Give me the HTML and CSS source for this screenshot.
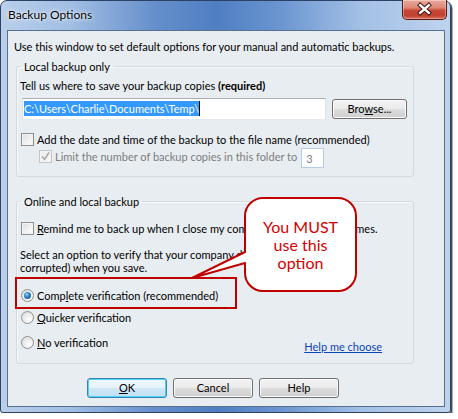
FILE: index.html
```html
<!DOCTYPE html>
<html>
<head>
<meta charset="utf-8">
<title>Backup Options</title>
<link rel="stylesheet" href="styles.css">
</head>
<body>
<div class="window">
  <div class="titlebar">
    <span class="title">Backup Options</span>
    <span class="close">
      <svg width="45" height="19" viewBox="0 0 45 19">
        <path d="M18 5 L27 13 M27 5 L18 13" stroke="#3b1410" stroke-width="4.6" stroke-linecap="square" fill="none"/>
        <path d="M18 5 L27 13 M27 5 L18 13" stroke="#ffffff" stroke-width="2.6" stroke-linecap="square" fill="none"/>
      </svg>
    </span>
  </div>
  <div class="client">
    <p class="intro">Use this window to set default options for your manual and automatic backups.</p>

    <fieldset class="group g1">
      <legend>Local backup only</legend>
      <p class="prompt">Tell us where to save your backup copies <b>(required)</b></p>
      <div class="path-row">
        <div class="textbox"><span class="sel">C:\Users\Charlie\Documents\Temp\</span><span class="caret"></span></div>
        <button class="btn browse">Bro<u>w</u>se...</button>
      </div>
      <div class="check row1"><span class="box"></span><span>Add the date and time of the backup to the file name (recommended)</span></div>
      <div class="check row2 disabled">
        <span class="box checked"><svg width="11" height="11" viewBox="0 0 11 11"><path d="M2 5.5 L4.5 8.5 L9 1.5" stroke="#a9a9a9" stroke-width="1.6" fill="none"/></svg></span>
        <span>Limit the number of backup copies in this folder to</span>
        <span class="numbox">3</span>
      </div>
    </fieldset>

    <fieldset class="group g2">
      <legend>Online and local backup</legend>
      <div class="check remind"><span class="box"></span><span><u>R</u>emind me to back up when I close my company file every</span><span class="numbox inline">4</span><span>times.</span></div>
      <p class="verify">Select an option to verify that your company data is OK (that is, not<br>corrupted) when you save.</p>
      <div class="radio r1"><span class="dot on"></span><span>Comp<u>l</u>ete verification (recommended)</span></div>
      <div class="radio r2"><span class="dot"></span><span><u>Q</u>uicker verification</span></div>
      <div class="last-row">
        <div class="radio"><span class="dot"></span><span><u>N</u>o verification</span></div>
        <a class="help-link" href="#">Help me choose</a>
      </div>
    </fieldset>

    <div class="buttons">
      <button class="btn ok"><u>O</u>K</button>
      <button class="btn">Cancel</button>
      <button class="btn">Help</button>
    </div>
  </div>

  <svg class="annotation" width="451" height="413" viewBox="0 0 451 413">
    <rect x="16" y="278" width="220" height="30" fill="none" stroke="#c00000" stroke-width="2"/>
    <path d="M263 198 H338 A18 18 0 0 1 356 216 V273 A18 18 0 0 1 338 291 H263 A18 18 0 0 1 245 273 V263 L192 278 L245 252 V216 A18 18 0 0 1 263 198 Z" fill="#ffffff" stroke="#c00000" stroke-width="2" stroke-linejoin="round"/>
  </svg>
  <div class="callout-text">You MUST<br>use this<br>option</div>
</div>
</body>
</html>
```

FILE: styles.css
```css
* { box-sizing: border-box; }
html, body { margin: 0; padding: 0; background: #ffffff; }
body {
  font-family: Lato, "Noto Sans", sans-serif;
  font-size: 11px;
  color: #000;
}

.window {
  position: relative;
  width: 451px;
  height: 413px;
  display: flex;
  flex-direction: column;
  border: 1px solid #2c4163;
  border-radius: 7px 7px 3px 3px;
  background: linear-gradient(90deg, #b9cfea 0%, #a0bde3 16%, #6690cc 34%, #4f7ec2 48%, #6a95d0 62%, #a3c0e5 80%, #bfd3ee 100%);
  box-shadow: 1px 1px 0 #4a4a4a, 2px 2px 1px rgba(0,0,0,0.35);
}

.titlebar {
  height: 29px;
  display: flex;
  align-items: flex-start;
  padding: 0 3px 0 7px;
}
.title {
  margin-top: 6px;
  line-height: 16px;
  font-size: 12px;
  color: #000;
  text-shadow: 0 0 5px rgba(255,255,255,0.95), 0 0 2px rgba(255,255,255,0.9);
}
.close {
  margin-left: auto;
  margin-top: -1px;
  width: 45px;
  height: 20px;
  border: 1px solid #5a1a12;
  border-top: none;
  border-radius: 0 0 5px 5px;
  background: linear-gradient(180deg, #e9aa9c 0%, #dd8877 40%, #c8483a 55%, #c1402f 80%, #d9695a 100%);
  box-shadow: inset 0 0 0 1px rgba(255,255,255,0.35);
  display: flex;
}

.client {
  flex: 1;
  margin: 0 5px 5px 6px;
  border: 1px solid #56708f;
  background: #e8edf1;
  display: flex;
  flex-direction: column;
  align-items: flex-start;
}

.intro {
  margin: 0;
  padding: 8px 0 0 6px;
  line-height: 15px;
}

.group {
  margin: 5px 0 0 8px;
  width: 398px;
  min-width: 0;
  border: 1px solid #d2d9df;
  border-radius: 3px;
  box-shadow: inset 1px 1px 0 #f6f8fa;
  padding: 4px 0 8px 3px;
}
.group legend {
  margin-left: 1px;
  padding: 0 3px;
  line-height: 15px;
  font-size: 11px;
}
.g2 {
  margin-top: 17px;
  padding-top: 12px;
  padding-bottom: 9px;
}

.prompt {
  margin: 0;
  line-height: 15px;
}

.path-row {
  display: flex;
  align-items: center;
  margin-top: 5px;
  height: 22px;
}
.textbox {
  margin-left: 2px;
  width: 304px;
  height: 22px;
  background: #fff;
  border: 1px solid #abadb3;
  border-left-color: #e2e3ea;
  border-right-color: #dbdfe6;
  border-bottom-color: #e3e9ef;
  padding: 2px 0 0 1px;
  display: flex;
  align-items: flex-start;
}
.sel {
  background: #3399ff;
  color: #fff;
  line-height: 15px;
  height: 15px;
}
.caret {
  width: 1px;
  height: 15px;
  background: #000;
}

.btn {
  font-family: Lato, "Noto Sans", sans-serif;
  font-size: 11px;
  color: #000;
  height: 20px;
  padding: 0;
  border: 1px solid #707070;
  border-radius: 3px;
  background: linear-gradient(180deg, #f2f2f2 0%, #ebebeb 48%, #dddddd 52%, #cfcfcf 100%);
  box-shadow: inset 0 0 0 1px #fcfcfc;
  line-height: 16px;
}
.browse {
  margin-left: 6px;
  width: 75px;
}

.check, .radio {
  display: flex;
  align-items: center;
  line-height: 15px;
}
.box {
  width: 13px;
  height: 13px;
  border: 1px solid #8f8f8f;
  background: linear-gradient(135deg, #dcdcdc 0%, #f3f3f3 60%, #fbfbfb 100%);
  box-shadow: inset 0 0 0 1px #f4f4f4;
  margin-right: 3px;
  flex: none;
  display: flex;
  align-items: center;
  justify-content: center;
}
.row1 { margin-top: 12px; margin-left: 1px; }
.row2 {
  margin-top: 2px;
  margin-left: 19px;
  align-items: flex-start;
}
.row2 .box { margin-top: 1px; }
.disabled { color: #7d7d7d; }
.box.checked {
  border-color: #c5c5c5;
  background: linear-gradient(135deg, #eeeeee 0%, #f8f8f8 100%);
}
.numbox {
  margin-left: 4px;
  margin-top: -1px;
  width: 23px;
  height: 20px;
  border: 1px solid #b4cbe3;
  background: #fff;
  padding: 2px 0 0 4px;
  line-height: 15px;
  color: #7d7d7d;
  flex: none;
}
.numbox.inline {
  margin: -3px 4px -2px;
  color: #000;
}

.remind { margin-left: 1px; }
.verify {
  margin: 12px 0 0 0;
  line-height: 13px;
}
.radio { margin-left: 1px; }
.r1 { margin-top: 14px; }
.r2 { margin-top: 7px; }
.dot {
  width: 13px;
  height: 13px;
  border-radius: 50%;
  border: 1px solid #8f8f8f;
  background: radial-gradient(circle at 65% 70%, #fdfdfd 0%, #ececec 50%, #d6d6d6 100%);
  margin-right: 3px;
  flex: none;
  display: flex;
  align-items: center;
  justify-content: center;
}
.dot.on::after {
  content: "";
  width: 7px;
  height: 7px;
  border-radius: 50%;
  background: radial-gradient(circle at 40% 35%, #8fd0f8 0%, #2a7fc0 45%, #0d4f86 100%);
}

.last-row {
  margin-top: 10px;
  width: 100%;
  display: flex;
  align-items: flex-start;
  justify-content: space-between;
}
.help-link {
  margin-top: 4px;
  margin-right: 31px;
  line-height: 15px;
  color: #0b46b8;
  text-decoration: underline;
}

.buttons {
  margin: 14px 0 0 79px;
  display: flex;
  gap: 6px;
}
.buttons .btn { width: 80px; }
.btn.ok {
  border-color: #3c7fb1;
  box-shadow: inset 0 0 0 1px #48d7fa;
  background: linear-gradient(180deg, #f0f8fd 0%, #e6f2fa 48%, #cfe6f6 52%, #c3dff3 100%);
}

.annotation {
  position: absolute;
  left: -1px;
  top: -1px;
  pointer-events: none;
}
.callout-text {
  position: absolute;
  left: 244px;
  top: 197px;
  width: 111px;
  height: 93px;
  display: flex;
  align-items: center;
  justify-content: center;
  text-align: center;
  font-family: Lato, "Liberation Sans", sans-serif;
  font-size: 16px;
  line-height: 18px;
  color: #d40000;
}
```
